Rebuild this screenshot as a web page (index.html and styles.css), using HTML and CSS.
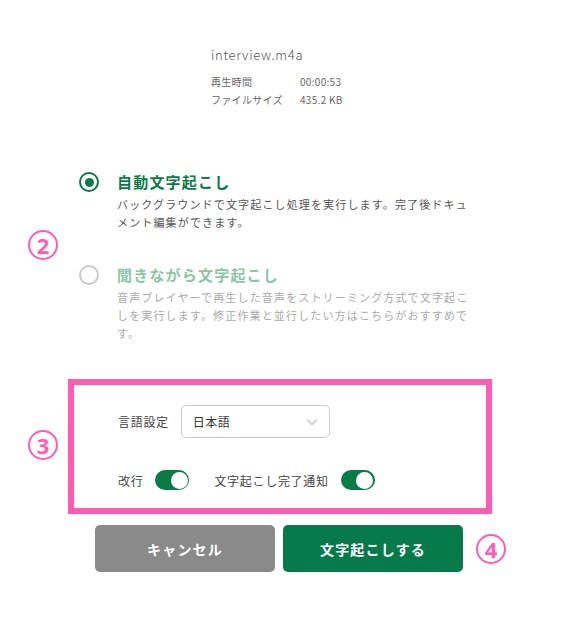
FILE: index.html
```html
<!DOCTYPE html>
<html lang="ja">
<head>
  <meta charset="UTF-8">
  <title>文字起こし設定</title>
  <meta name="viewport" content="width=device-width, initial-scale=1.0">
  <link rel="stylesheet" href="styles.css">
</head>
<body>
  <div class="page">
    <div class="file-info">
      <div class="file-name">interview.m4a</div>
      <div class="meta">
        <span class="meta-label">再生時間</span><span>00:00:53</span>
        <span class="meta-label">ファイルサイズ</span><span>435.2 KB</span>
      </div>
    </div>

    <div class="modes">
      <div class="mode">
        <span class="radio checked"></span>
        <div>
          <div class="mode-title">自動文字起こし</div>
          <p class="mode-desc">バックグラウンドで文字起こし処理を実行します。完了後ドキュメント編集ができます。</p>
        </div>
      </div>
      <div class="mode disabled">
        <span class="radio"></span>
        <div>
          <div class="mode-title">聞きながら文字起こし</div>
          <p class="mode-desc">音声プレイヤーで再生した音声をストリーミング方式で文字起こしを実行します。修正作業と並行したい方はこちらがおすすめです。</p>
        </div>
      </div>
    </div>

    <div class="settings">
      <div class="row">
        <span class="label">言語設定</span>
        <div class="select">
          <span>日本語</span>
          <svg width="12" height="8" viewBox="0 0 12 8"><path d="M1 1.5 L6 6.5 L11 1.5" fill="none" stroke="#c4c4c4" stroke-width="1.4"/></svg>
        </div>
      </div>
      <div class="row toggles">
        <span class="label">改行</span>
        <span class="toggle"></span>
        <span class="label label-gap">文字起こし完了通知</span>
        <span class="toggle"></span>
      </div>
    </div>

    <div class="actions">
      <button class="btn cancel">キャンセル</button>
      <button class="btn primary">文字起こしする</button>
      <span class="note note-4">4</span>
    </div>

    <!-- 注釈 -->
    <span class="note note-2">2</span>
    <span class="note note-3">3</span>
  </div>
</body>
</html>
```

FILE: styles.css
```css
body {
  margin: 0;
  background: #fff;
  font-family: "Noto Sans CJK JP", "Noto Sans", sans-serif;
  color: #444;
}
.page {
  position: relative;
  width: 582px;
  height: 627px;
}
.file-info {
  padding: 45px 0 0 211px;
}
.file-name {
  font-size: 13px;
  font-weight: 300;
  letter-spacing: 0.7px;
  color: #555;
  line-height: 20px;
}
.meta {
  display: grid;
  grid-template-columns: 89px auto;
  margin-top: 8px;
  font-size: 10px;
  line-height: 18px;
  color: #666;
  letter-spacing: 0.3px;
}
.modes {
  margin-top: 60px;
  padding-left: 79px;
}
.mode {
  display: flex;
  gap: 18px;
  align-items: flex-start;
}
.mode + .mode {
  margin-top: 31px;
}
.radio {
  box-sizing: border-box;
  width: 20px;
  height: 20px;
  margin-top: 3px;
  border-radius: 50%;
  border: 2px solid #c9c9c9;
  flex-shrink: 0;
  display: flex;
  align-items: center;
  justify-content: center;
}
.radio.checked {
  border: 2.5px solid #0b7a48;
}
.radio.checked::after {
  content: "";
  width: 9px;
  height: 9px;
  border-radius: 50%;
  background: #0b7a48;
}
.mode-title {
  font-size: 15px;
  font-weight: bold;
  letter-spacing: 1.2px;
  color: #0b7a48;
  line-height: 26px;
}
.mode-desc {
  margin: 0;
  width: 360px;
  font-size: 11px;
  letter-spacing: 1.15px;
  line-height: 18px;
  color: #555;
}
.disabled .mode-title {
  color: #8cc5a6;
}
.disabled .mode-desc {
  color: #aaa;
}
.note {
  position: absolute;
  box-sizing: border-box;
  width: 30px;
  height: 30px;
  border: 2.5px solid #ff5cb4;
  border-radius: 50%;
  display: flex;
  align-items: center;
  justify-content: center;
  color: #ff5cb4;
  font-family: "Noto Sans", sans-serif;
  font-size: 22px;
  font-weight: bold;
  line-height: 1;
}
.note-2 {
  left: 28px;
  top: 230px;
}
.note-3 {
  left: 28px;
  top: 430px;
}
.settings {
  box-sizing: border-box;
  width: 424px;
  height: 135px;
  margin: 37px 0 0 68px;
  border: 6px solid #ff5cb4;
  padding: 20px 0 0 44px;
}
.row {
  display: flex;
  align-items: center;
}
.label {
  font-size: 12px;
  letter-spacing: 0.7px;
  color: #444;
}
.select {
  box-sizing: border-box;
  width: 149px;
  height: 33px;
  margin-left: 12px;
  border: 1px solid #ccc;
  border-radius: 5px;
  display: flex;
  align-items: center;
  justify-content: space-between;
  padding: 0 11px 0 11px;
  font-size: 12px;
  letter-spacing: 0.5px;
  color: #333;
}
.toggles {
  margin-top: 32px;
}
.toggle {
  box-sizing: border-box;
  position: relative;
  width: 34px;
  height: 20px;
  margin-left: 12px;
  border-radius: 10px;
  background: #0b7a48;
}
.toggle::after {
  content: "";
  position: absolute;
  right: 1.5px;
  top: 1.5px;
  width: 17px;
  height: 17px;
  border-radius: 50%;
  background: #fff;
}
.label-gap {
  margin-left: 25px;
}
.actions {
  display: flex;
  align-items: center;
  gap: 8px;
  margin-top: 11px;
  padding-left: 95px;
}
.btn {
  width: 180px;
  height: 47px;
  border: none;
  border-radius: 5px;
  color: #fff;
  font-family: inherit;
  font-size: 14px;
  font-weight: bold;
  letter-spacing: 1.2px;
}
.cancel {
  background: #8a8a8a;
}
.primary {
  background: #077a4a;
}
.note-4 {
  position: static;
  margin-left: 5px;
}
```
